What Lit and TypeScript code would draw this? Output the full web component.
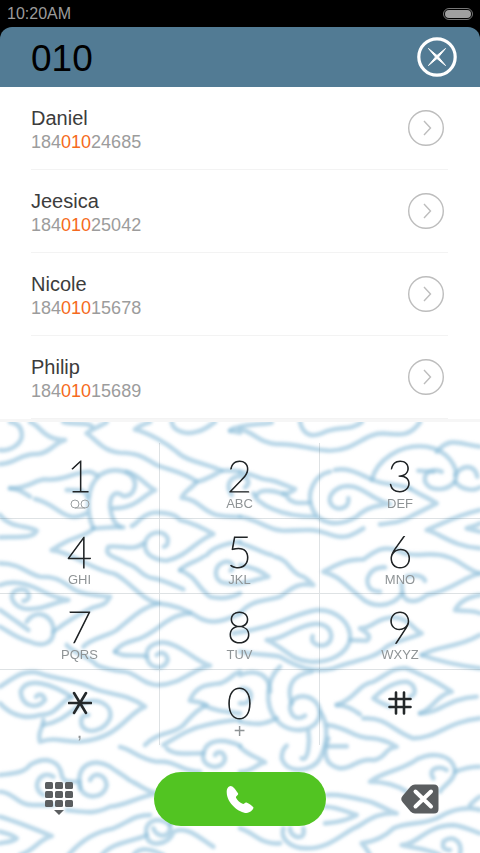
import { LitElement, html, svg, css } from "lit";
import { customElement, property, state } from "lit/decorators.js";

interface Contact {
  name: string;
  number: string;
}

interface Key {
  digit: string;
  letters: string;
}

const CONTACTS: Contact[] = [
  { name: "Daniel", number: "18401024685" },
  { name: "Jeesica", number: "18401025042" },
  { name: "Nicole", number: "18401015678" },
  { name: "Philip", number: "18401015689" },
];

const KEYS: Key[] = [
  { digit: "1", letters: "voicemail" },
  { digit: "2", letters: "ABC" },
  { digit: "3", letters: "DEF" },
  { digit: "4", letters: "GHI" },
  { digit: "5", letters: "JKL" },
  { digit: "6", letters: "MNO" },
  { digit: "7", letters: "PQRS" },
  { digit: "8", letters: "TUV" },
  { digit: "9", letters: "WXYZ" },
  { digit: "*", letters: "," },
  { digit: "0", letters: "+" },
  { digit: "#", letters: "" },
];

/* Cloud line work, one tile per quarter of the wallpaper. */
const CLOUDS_TOP_LEFT = [
  "M0 150C30 155 70 130 65 100C63 75 45 68 30 66",
  "M90 66C120 75 130 120 195 120C160 130 150 160 110 162C60 160 50 190 0 192",
  "M190 66C220 75 260 66 275 78",
  "M320 66C300 80 275 85 260 100C290 120 310 155 360 158C430 160 440 180 470 195C510 210 560 220 590 245C620 240 640 225 665 212C620 190 560 185 530 155C500 130 450 100 405 88C420 75 435 72 450 66",
  "M515 66C520 95 560 105 590 95C615 90 630 75 645 66",
  "M665 212C685 212 700 210 720 215",
  "M590 245C575 265 550 275 545 293C600 300 600 330 650 345C680 352 700 350 720 350",
  "M30 265C90 265 100 240 135 238C190 245 220 215 270 215C280 218 285 222 290 225",
  "M30 265C60 265 80 285 90 290",
  "M105 297C160 310 180 345 215 350C235 352 250 345 258 340",
  "M200 270C230 270 255 268 262 290",
  "M280 385C260 340 255 260 300 225C340 200 400 210 405 250C405 275 390 290 370 288C345 270 330 285 330 320C335 350 340 370 360 380",
  "M380 215C420 225 440 260 465 270C430 285 410 325 340 325",
  "M280 385C310 385 340 378 370 382",
  "M395 378C410 375 420 345 460 338C500 335 530 345 540 360C580 370 610 385 640 402C590 420 560 470 500 482C460 480 430 460 435 430C440 395 490 385 503 415C505 430 500 438 492 440",
  "M430 430C400 455 370 435 325 440C310 470 350 470 380 490C420 500 420 530 460 535C490 540 520 555 550 568",
  "M0 345C30 385 80 375 110 392C100 415 60 410 0 412",
  "M280 385C260 410 220 410 190 430C170 440 165 445 155 450C210 455 260 500 330 518C370 520 420 600 475 610C530 615 570 635 600 655C640 675 680 660 720 640",
  "M0 490C60 490 80 520 120 530C180 530 190 550 210 560C240 585 290 585 330 590C320 610 310 615 280 622C240 640 200 665 160 695",
  "M0 555C50 535 100 560 130 575C160 590 180 595 205 600C160 605 120 635 70 625C30 615 20 570 65 568C90 570 95 600 70 603",
  "M0 630C30 650 50 665 85 690",
  "M80 665C110 620 165 650 160 695C160 735 120 740 90 725C50 715 20 690 0 680",
  "M475 610C430 620 400 650 350 690C320 710 270 715 250 740",
  "M570 640C500 645 480 690 420 715C390 725 360 730 345 755",
  "M540 510C560 490 590 485 610 470",
  "M620 465C640 440 680 430 720 425",
  "M540 510C590 530 590 560 630 590C670 600 700 590 720 580",
];

const CLOUDS_TOP_RIGHT = [
  "M-30 92C-20 82 -10 85 0 80C40 70 60 75 95 68",
  "M-30 92L0 98",
  "M0 88C40 95 60 130 110 132C170 130 210 150 270 152C350 150 370 100 430 100C480 105 510 110 540 66",
  "M180 66C190 110 220 110 245 100C290 75 330 95 365 66",
  "M0 350C60 360 80 390 130 392C200 390 220 385 260 400C310 420 330 410 370 385",
  "M420 373C460 368 490 365 520 345C550 330 570 320 590 310C560 290 530 280 510 265",
  "M0 215C50 225 60 240 90 240C120 245 140 260 165 267C155 277 140 280 130 280",
  "M40 280C50 310 120 350 225 350",
  "M50 285C60 265 110 270 140 288C150 310 175 310 208 308",
  "M-25 285C-45 255 -30 230 0 228C25 228 32 250 15 262",
  "M270 215C220 225 200 280 215 320C230 370 290 385 350 350C380 320 420 315 450 312C400 300 380 270 340 260C290 250 255 290 275 315C290 335 330 325 325 295",
  "M285 210C330 200 370 230 400 240C430 255 470 250 510 265",
  "M395 240C410 180 480 130 560 140C620 150 660 200 645 245C620 275 570 275 555 245C550 215 575 205 605 215",
  "M535 212L580 215",
  "M590 155C630 110 650 130 720 140",
  "M645 225C670 190 705 195 712 230",
  "M645 245C665 270 700 275 720 262",
  "M720 330C640 350 610 370 560 390C600 400 640 440 720 445",
  "M720 370C705 380 695 378 680 385L720 395",
  "M0 430C40 440 60 455 95 465",
  "M105 470C150 480 150 520 190 530C200 535 210 545 220 555C170 545 150 570 120 590C70 605 30 600 0 640",
  "M-28 512C-10 495 -30 480 -50 487C-80 500 -80 540 -50 548C0 560 40 540 85 530C60 510 30 500 0 495",
  "M720 520C680 510 660 480 620 470C570 450 520 480 470 450C420 435 400 460 370 478C310 480 300 490 250 515C300 530 310 550 360 590C390 620 450 630 487 580L485 550",
  "M487 580C495 610 530 610 560 585C640 570 670 530 720 520",
  "M435 502C390 500 370 540 390 565C400 575 410 575 420 575",
  "M500 530C530 520 550 530 555 542",
  "M720 585C690 590 660 600 645 630C680 635 700 630 720 640",
  "M-20 700C120 680 160 640 230 630C290 628 335 670 330 720C320 760 270 790 210 785C150 780 130 740 80 720C130 720 160 680 220 672C275 665 290 720 255 735C235 740 210 730 218 708",
  "M330 720L380 722C395 710 385 700 360 685C400 685 400 655 460 652C510 655 520 690 545 700C500 720 470 720 440 740C400 780 340 780 280 805C220 820 170 800 120 770C90 762 40 765 0 755",
];

const CLOUDS_BOTTOM_LEFT = [
  "M440 95C435 60 480 40 520 60C560 75 590 110 630 122C580 130 540 180 475 180C430 180 410 145 375 140C330 135 310 130 290 120C270 95 220 85 200 60",
  "M345 80C370 100 410 85 440 95C445 130 490 140 503 105C500 80 480 80 470 90",
  "M0 185C40 160 70 130 120 145C180 165 230 165 280 190C330 210 380 205 435 245C380 265 360 340 240 350C180 350 170 335 120 350C110 320 130 310 130 285",
  "M215 215C160 180 80 150 62 200C65 245 110 255 135 225C130 205 115 205 108 215",
  "M0 235C40 280 90 280 120 270C170 270 180 230 215 215",
  "M130 300C180 290 200 270 240 240C290 210 340 240 330 280C310 320 260 330 245 300C240 275 250 270 265 270",
  "M435 360C470 320 520 330 550 300C570 280 580 260 620 240C590 225 565 230 570 225C590 180 620 180 660 175C690 165 700 145 720 140",
  "M490 360C540 330 570 310 620 300C660 290 690 285 720 285",
  "M610 240C650 260 680 260 720 265",
  "M0 450C40 445 70 445 90 420C140 390 180 410 185 450C190 470 200 470 240 470",
  "M240 490C225 410 290 400 330 425C350 440 370 450 388 465",
  "M397 470C420 480 440 500 470 505C400 520 380 540 330 545C280 570 250 560 200 555",
  "M240 480C240 520 310 530 320 480C315 445 280 440 270 465",
  "M0 500C40 500 50 540 100 540L160 540",
  "M160 455C120 430 90 490 130 510",
  "M0 575C50 590 100 610 155 633C120 640 100 680 60 690",
  "M0 620C20 625 40 630 50 640C30 655 10 650 0 655",
  "M205 690C250 640 290 620 340 610C390 590 400 570 450 570",
  "M305 690C340 650 400 650 440 630C430 590 470 570 510 600C515 640 470 640 460 610",
  "M440 630C440 670 510 660 520 620C560 600 600 640 640 665",
  "M400 690C420 665 450 670 490 690",
  "M360 366C400 375 410 400 470 410C530 405 540 440 600 440",
  "M500 370C520 390 550 385 610 385C600 430 670 440 675 400C670 375 650 380 645 390",
  "M610 385C620 340 670 340 720 362",
  "M510 600L520 580",
];

const CLOUDS_BOTTOM_RIGHT = [
  "M0 365C20 390 50 395 75 412C50 415 40 440 0 440",
  "M545 90C600 60 650 70 720 30",
  "M545 90C600 110 650 120 720 130",
  "M120 125C80 160 70 240 110 285C150 335 240 320 240 260C230 200 150 200 150 250C155 280 175 285 195 272",
  "M215 140C150 150 140 190 155 235",
  "M240 260C270 300 260 360 240 400C220 440 140 450 125 400C125 380 130 370 140 362",
  "M205 320C210 350 205 410 185 400",
  "M0 150C50 130 90 150 90 200",
  "M0 235C40 240 45 190 5 190",
  "M0 290C50 300 70 300 110 280",
  "M265 300C330 310 340 340 400 340C440 345 450 355 470 365C430 370 440 400 400 405C350 400 340 430 300 430C250 420 250 380 265 340",
  "M260 364L320 364",
  "M290 240C350 220 350 180 400 170C440 150 460 125 500 130C530 140 540 150 545 150",
  "M555 155C590 170 610 185 635 200C590 210 580 250 540 265",
  "M290 240C320 240 340 255 360 268",
  "M370 280C440 275 460 320 520 340C590 340 620 290 720 280",
  "M540 265C600 265 620 220 710 215",
  "M450 245C440 240 420 235 400 220C430 190 460 170 500 170C530 180 530 210 510 215",
  "M500 500C470 480 440 470 390 470C430 440 470 440 520 410C560 380 640 380 645 440C640 470 610 480 600 500",
  "M580 460C560 430 600 420 620 435",
  "M645 440C670 430 690 425 720 425",
  "M260 510C300 505 350 520 390 530C420 540 450 560 470 565C400 560 370 600 340 610C290 640 260 670 200 670C150 670 120 640 130 610",
  "M255 545C290 545 320 560 350 570C330 580 310 590 255 595",
  "M190 610C200 650 150 640 150 610",
  "M0 610C40 620 60 660 120 655",
  "M390 690C385 680 380 670 365 655C400 650 430 640 460 610C500 590 560 600 600 575C640 550 690 545 720 555",
  "M600 690C560 670 520 670 485 660C530 660 560 600 640 600C680 605 700 620 720 625",
  "M660 690C670 640 630 630 610 650C605 670 615 675 630 675",
  "M690 540C700 530 710 520 720 515",
];

const strokes = (paths: string[]) => paths.map((d) => svg`<path d=${d} />`);

@customElement("contact-row")
class ContactRow extends LitElement {
  @property({ attribute: false }) contact!: Contact;
  @property() query = "";

  static styles = css`
    :host {
      display: flex;
      align-items: center;
      justify-content: space-between;
      box-sizing: border-box;
      height: 83px;
      margin: 0 32px 0 31px;
      padding-right: 4px;
      border-bottom: 1px solid #f3f3f3;
    }
    .text {
      padding-top: 4px;
    }
    .name {
      font-size: 20px;
      line-height: 24px;
      color: #3c3c3c;
    }
    .number {
      font-size: 18px;
      line-height: 24px;
      color: #9c9c9c;
    }
    .match {
      color: #f56a20;
    }
    .more {
      display: block;
      width: 36px;
      height: 36px;
      padding: 0;
      border: 0;
      background: none;
    }
    .more svg {
      display: block;
      fill: none;
      stroke: #bdbdbd;
    }
  `;

  render() {
    const { name, number } = this.contact;
    const at = number.indexOf(this.query);
    const end = at + this.query.length;
    return html`
      <div class="text">
        <div class="name">${name}</div>
        <div class="number">${number.slice(0, at)}<span class="match">${number.slice(at, end)}</span>${number.slice(end)}</div>
      </div>
      <button class="more" aria-label="Details for ${name}">
        <svg width="36" height="36" viewBox="0 0 36 36">
          <circle cx="18" cy="18" r="17.3" stroke-width="1.4" />
          <path d="M16 11l6.500 7-6.500 7" stroke-width="1.400" />
        </svg>
      </button>
    `;
  }
}

@customElement("app-root")
class AppRoot extends LitElement {
  @state() private query = "010";

  static styles = css`
    :host {
      display: flex;
      flex-direction: column;
      min-height: 100vh;
      background: #fff;
      font-family: "Liberation Sans", Arial, sans-serif;
    }
    button {
      font-family: inherit;
      padding: 0;
      border: 0;
      background: none;
      cursor: pointer;
    }
    svg {
      display: block;
    }
    .top {
      background: #000;
    }
    .status {
      display: flex;
      align-items: center;
      justify-content: space-between;
      height: 27px;
      padding: 0 7px;
      font-size: 16px;
      color: #9b9b9b;
    }
    .entry {
      display: flex;
      align-items: center;
      justify-content: space-between;
      height: 60px;
      padding: 0 23px 0 31px;
      border-radius: 12px 12px 0 0;
      background: #527b94;
    }
    .field {
      flex: 1;
      min-width: 0;
      height: 56px;
      padding: 4px 0 0;
      border: 0;
      outline: 0;
      box-sizing: border-box;
      background: none;
      font-family: inherit;
      font-size: 37px;
      color: #000;
    }
    .results {
      border-bottom: 3px solid #f6f6f6;
    }
    .dialer {
      position: relative;
      flex: 1;
      display: flex;
      flex-direction: column;
      padding-top: 21px;
    }
    .clouds {
      position: absolute;
      inset: 0;
      width: 100%;
      height: 100%;
    }
    .clouds g {
      fill: none;
      stroke: #94c2db;
      stroke-opacity: 0.65;
      stroke-width: 14;
      stroke-linecap: round;
      stroke-linejoin: round;
    }
    .keys {
      position: relative;
      display: grid;
      grid-template-columns: repeat(3, 1fr);
      grid-auto-rows: 1fr;
      height: 302px;
    }
    .key {
      display: flex;
      flex-direction: column;
      align-items: center;
      padding-top: 12px;
      border-right: 1px solid rgba(90, 110, 120, 0.2);
      border-bottom: 1px solid rgba(90, 110, 120, 0.2);
    }
    .key:nth-child(3n) {
      border-right: 0;
    }
    .key:nth-child(n + 10) {
      border-bottom: 0;
    }
    .digit {
      height: 42px;
      font-family: Lato, "Liberation Sans", sans-serif;
      font-weight: 200;
      font-size: 43px;
      line-height: 42px;
      color: #202426;
      -webkit-text-stroke: 1px #202426;
    }
    .letters {
      font-size: 13px;
      line-height: 14px;
      color: #8f9496;
    }
    .symbol {
      display: flex;
      align-items: center;
      height: 42px;
      fill: none;
      stroke: #24282a;
      stroke-width: 2.6;
      stroke-linecap: round;
    }
    .voicemail {
      fill: none;
      stroke: #9a9fa1;
    }
    .mark {
      font-size: 20px;
      line-height: 14px;
      color: #8f9496;
    }
    .actions {
      position: relative;
      display: grid;
      grid-template-columns: 1fr 172px 1fr;
      align-items: center;
      margin-top: 27px;
      padding: 0 40px;
    }
    .call {
      display: grid;
      place-items: center;
      height: 54px;
      border-radius: 27px;
      background: #52c422;
    }
    .hide {
      justify-self: start;
    }
    .delete {
      justify-self: end;
    }
  `;

  private sub(key: Key) {
    if (key.digit === "1") {
      return html`<svg class="voicemail" width="20" height="14" viewBox="0 0 20 14">
        <circle cx="5" cy="7" r="4" />
        <circle cx="15" cy="7" r="4" />
        <path d="M5 11h10" />
      </svg>`;
    }
    const plain = key.letters === "," || key.letters === "+";
    return html`<span class=${plain ? "mark" : "letters"}>${key.letters}</span>`;
  }

  private face(key: Key) {
    if (key.digit === "*") {
      return html`<span class="symbol"><svg width="24" height="24" viewBox="0 0 24 24">
        <path d="M1 12h22M6 2l12 20M18 2L6 22" />
      </svg></span>`;
    }
    if (key.digit === "#") {
      return html`<span class="symbol"><svg width="24" height="24" viewBox="0 0 24 24">
        <path d="M1.500 8h21M1.500 16h21M8 1.500v21M16 1.500v21" />
      </svg></span>`;
    }
    return html`<span class="digit">${key.digit}</span>`;
  }

  private clouds() {
    return html`<svg class="clouds" viewBox="0 66 1440 1293" preserveAspectRatio="xMidYMin slice" aria-hidden="true">
      <defs>
        <filter id="soft" x="-5%" y="-5%" width="110%" height="110%">
          <feGaussianBlur stdDeviation="4" />
        </filter>
      </defs>
      <g filter="url(#soft)">
        <g>${strokes(CLOUDS_TOP_LEFT)}</g>
        <g transform="translate(720 0)">${strokes(CLOUDS_TOP_RIGHT)}</g>
        <g transform="translate(0 675)">${strokes(CLOUDS_BOTTOM_LEFT)}</g>
        <g transform="translate(720 675)">${strokes(CLOUDS_BOTTOM_RIGHT)}</g>
      </g>
    </svg>`;
  }

  render() {
    return html`
      <header class="top">
        <div class="status">
          <span>10:20AM</span>
          <svg width="30" height="12" viewBox="0 0 30 12" role="img" aria-label="Battery">
            <rect x="0.500" y="0.500" width="29" height="11" rx="5.500" fill="none" stroke="#777" />
            <rect x="2" y="2" width="26" height="8" rx="4" fill="#a0a0a0" />
          </svg>
        </div>
        <div class="entry">
          <input class="field" type="tel" aria-label="Phone number" .value=${this.query} />
          <button class="clear" aria-label="Clear number">
            <svg width="40" height="40" viewBox="0 0 40 40">
              <circle cx="20" cy="20" r="18.200" fill="none" stroke="#fff" stroke-width="3.200" />
              <path d="M11.500 11.500L20 18.500 28.500 11.500 21.500 20 28.500 28.500 20 21.500 11.500 28.500 18.500 20Z" fill="#fff" stroke="#fff" stroke-width="1" />
            </svg>
          </button>
        </div>
      </header>
      <section class="results">
        ${CONTACTS.map((c) => html`<contact-row .contact=${c} .query=${this.query}></contact-row>`)}
      </section>
      <section class="dialer">
        ${this.clouds()}
        <div class="keys">
          ${KEYS.map((k) => html`<button class="key" aria-label=${k.digit}>${this.face(k)}${this.sub(k)}</button>`)}
        </div>
        <div class="actions">
          <button class="hide" aria-label="Hide keypad">
            <svg width="34" height="34" viewBox="-4 0 34 34" fill="#5b5e60">
              ${[0, 1, 2].map((r) => [0, 1, 2].map((c) => svg`<rect x=${1 + c * 10} y=${r * 9} width="8" height="7" rx="1.500" />`))}
              <path d="M10 28h10l-5 5z" />
            </svg>
          </button>
          <button class="call" aria-label="Call">
            <svg width="28" height="28" viewBox="0 0 28 28" fill="#fff">
              <path d="M0.700 7C0.700 3.500 2.500 1.200 4.600 1C7 1 9 4 12 8.200C13 10 9.500 11 10 12.800C11.500 15.500 14 18 16.500 18.800C18.500 19.500 18.500 17.200 20.500 17.600C23 18.500 26.500 21 27.500 22.500C27.500 24.500 24 27.800 20.500 28C13.500 28 0.700 18.500 0.700 7Z" />
            </svg>
          </button>
          <button class="delete" aria-label="Delete digit">
            <svg width="40" height="30" viewBox="0 0 40 30">
              <path d="M15 0.500H34Q38.500 0.500 38.500 5V25Q38.500 29.500 34 29.500H15Q12.500 29.500 10.500 27.500L2.500 18Q0 15 2.500 12L10.500 2.500Q12.500 0.500 15 0.500Z" fill="#5b5e60" />
              <path d="M15.500 7.500L31 22.500M31 7.500L15.500 22.500" stroke="#fff" stroke-width="4" stroke-linecap="round" />
            </svg>
          </button>
        </div>
      </section>
    `;
  }
}
